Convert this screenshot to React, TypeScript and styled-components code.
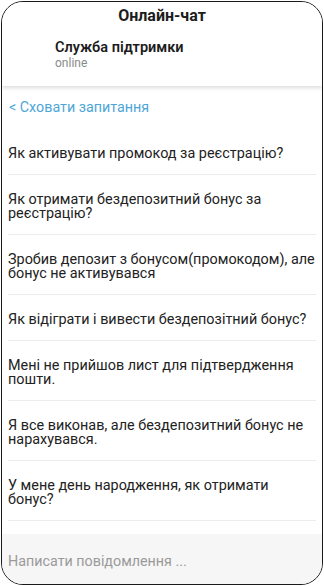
import React from "react";
import styled, { createGlobalStyle } from "styled-components";

const Global = createGlobalStyle`
  html, body { margin: 0; padding: 0; background: #fff; }
  body { font-family: Roboto, "Noto Sans", "Liberation Sans", sans-serif; }
  * { box-sizing: border-box; }
`;

const Frame = styled.div`
  margin: 1px;
  height: 584px;
  border: 1px solid #1a1a1a;
  border-radius: 22px;
  overflow: hidden;
  display: flex;
  flex-direction: column;
  background: #fff;
`;

const Header = styled.header`
  height: 84px;
  flex: none;
  background: #fff;
  box-shadow: 0 2px 4px rgba(0, 0, 0, 0.14);
  position: relative;
  z-index: 1;
  padding-top: 4px;
`;

const Title = styled.h1`
  margin: 0;
  text-align: center;
  font-size: 16px;
  line-height: 20px;
  font-weight: 700;
  color: #1c1c1c;
`;

const Agent = styled.div`
  padding: 13px 0 0 53px;
  display: flex;
  flex-direction: column;
`;

const AgentName = styled.div`
  font-size: 14.5px;
  line-height: 17px;
  font-weight: 600;
  color: #1c1c1c;
`;

const AgentStatus = styled.div`
  font-size: 12px;
  line-height: 14px;
  color: #8a8a8a;
`;

const Body = styled.main`
  flex: 1;
  overflow: hidden;
  padding: 0 6px;
`;

const HideLink = styled.a`
  display: block;
  padding-top: 13px;
  margin-bottom: 14px;
  font-size: 14.3px;
  line-height: 16px;
  color: #4ea6d8;
  text-decoration: none;
  padding-left: 1px;
`;

const Question = styled.div`
  padding: 18px 1px 13px 0;
  border-bottom: 1px solid #ececec;
  font-size: 14.4px;
  line-height: 14px;
  color: #222;
`;

const Composer = styled.footer`
  height: 50px;
  flex: none;
  background: #f6f6f6;
  padding: 19px 6px 0;
  font-size: 14.3px;
  line-height: 17px;
  color: #9a9a9a;
`;

const questions = [
  "Як активувати промокод за реєстрацію?",
  "Як отримати бездепозитний бонус за реєстрацію?",
  "Зробив депозит з бонусом(промокодом), але бонус не активувався",
  "Як відіграти і вивести бездепозітний бонус?",
  "Мені не прийшов лист для підтвердження пошти.",
  "Я все виконав, але бездепозитний бонус не нарахувався.",
  "У мене день народження, як отримати бонус?",
];

export default function App() {
  return (
    <>
      <Global />
      <Frame>
        <Header>
          <Title>Онлайн-чат</Title>
          <Agent>
            <AgentName>Служба підтримки</AgentName>
            <AgentStatus>online</AgentStatus>
          </Agent>
        </Header>
        <Body>
          <HideLink>&lt; Сховати запитання</HideLink>
          {questions.map((q) => (
            <Question key={q}>{q}</Question>
          ))}
        </Body>
        <Composer>Написати повідомлення ...</Composer>
      </Frame>
    </>
  );
}
